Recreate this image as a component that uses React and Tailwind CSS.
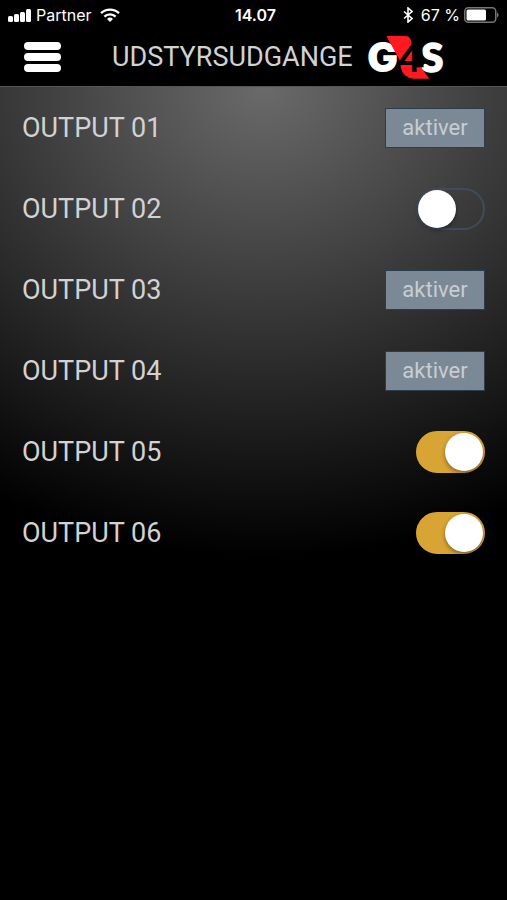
import React, { useState } from 'react';

const initialOutputs = [
  { id: 1, name: 'OUTPUT 01', type: 'pulse' },
  { id: 2, name: 'OUTPUT 02', type: 'switch', on: false },
  { id: 3, name: 'OUTPUT 03', type: 'pulse' },
  { id: 4, name: 'OUTPUT 04', type: 'pulse' },
  { id: 5, name: 'OUTPUT 05', type: 'switch', on: true },
  { id: 6, name: 'OUTPUT 06', type: 'switch', on: true },
];

function SignalIcon() {
  return (
    <svg width="24" height="14" viewBox="0 0 24 14" fill="#fff">
      <rect x="0" y="8" width="5" height="6" rx="1.5" />
      <rect x="6" y="6" width="5" height="8" rx="1.5" />
      <rect x="12" y="4" width="5" height="10" rx="1.5" />
      <rect x="18" y="1" width="5" height="13" rx="1.5" />
    </svg>
  );
}

function WifiIcon() {
  return (
    <svg width="20" height="14" viewBox="0 0 20 14" fill="none" stroke="#fff" strokeWidth="2.4">
      <path d="M1 5.2a13 13 0 0 1 18 0" />
      <path d="M4.4 8.6a8.2 8.2 0 0 1 11.2 0" />
      <path d="M7 10.9a4.4 4.4 0 0 1 6 0L10 14z" fill="#fff" stroke="none" />
    </svg>
  );
}

function BluetoothIcon() {
  return (
    <svg width="10" height="16" viewBox="0 0 10 16" fill="none" stroke="#fff" strokeWidth="1.6">
      <path d="M1 4.5l8 7L5 15V1l4 3.5-8 7" />
    </svg>
  );
}

function BatteryIcon() {
  return (
    <svg width="35" height="16" viewBox="0 0 35 16">
      <rect x="0.75" y="0.75" width="31" height="14.5" rx="3.5" fill="none" stroke="#777" strokeWidth="1.5" />
      <rect x="2.5" y="2.5" width="19.5" height="11" rx="1.5" fill="#fff" />
      <path d="M33 5.5c2 .8 2 4.2 0 5z" fill="#777" />
    </svg>
  );
}

function Logo() {
  return (
    <svg
      className="shrink-0"
      width="83"
      height="54"
      viewBox="0 -6 249 162"
      role="img"
      aria-label="G4S"
      fontFamily="Lato, sans-serif"
      fontWeight="900"
    >
      <text x="6" y="121" fontSize="124" fill="#fff" fontFamily="Inter, sans-serif">G</text>
      <text x="169" y="121" fontSize="120" fill="#fff" stroke="#fff" strokeWidth="5">S</text>
      <path
        d="M64 12h60q15 2 15 22l5 8 28 70 21 28h-48q-32-4-38-36V90z"
        fill="#ff1a1f"
      />
      {/* gap between the band and the S, to the right of the 4 */}
      <path d="M144 40h26l4 36 2 30h-32z" fill="#000" />
      <text x="101" y="121" fontSize="112" fill="#000">4</text>
    </svg>
  );
}

function StatusBar() {
  return (
    <div className="grid grid-cols-3 items-center h-7 px-2 pt-0.5 text-base leading-6 text-white font-['Inter',sans-serif]">
      <div className="flex items-center gap-1">
        <SignalIcon />
        <span>Partner</span>
        <span className="pl-1">
          <WifiIcon />
        </span>
      </div>
      <div className="pl-1 text-center font-semibold">14.07</div>
      <div className="flex items-center justify-end gap-1 whitespace-nowrap">
        <BluetoothIcon />
        <span className="pl-1">67 %</span>
        <BatteryIcon />
      </div>
    </div>
  );
}

function OutputRow({ output, onToggle }) {
  const inputId = `output-${output.id}`;

  return (
    <li className="flex items-center justify-between h-[81px] px-[22px]">
      {output.type === 'switch' ? (
        <>
          <label htmlFor={inputId}>{output.name}</label>
          <input
            id={inputId}
            type="checkbox"
            role="switch"
            checked={output.on}
            onChange={() => onToggle(output.id)}
            className="appearance-none flex items-center w-[69px] h-[42px] rounded-full border-2 border-[#414b5b] cursor-pointer before:block before:size-[38px] before:rounded-full before:bg-white before:shadow-[0_2px_4px_rgba(0,0,0,0.4)] checked:justify-end checked:bg-[#d8a434] checked:border-[#d8a434]"
          />
        </>
      ) : (
        <>
          <span id={inputId}>{output.name}</span>
          <button
            type="button"
            aria-describedby={inputId}
            className="w-[100px] h-10 border border-[#2b3e50] bg-[#7b8997] text-[22px] leading-7 text-[#c9cdd1]"
          >
            aktiver
          </button>
        </>
      )}
    </li>
  );
}

export default function App() {
  const [outputs, setOutputs] = useState(initialOutputs);

  const toggle = (id) => {
    setOutputs(outputs.map((o) => (o.id === id ? { ...o, on: !o.on } : o)));
  };

  return (
    <div className="flex flex-col min-h-screen bg-black text-[#d2d2d2] font-['Roboto',sans-serif]">
      <header className="bg-black">
        <StatusBar />
        <div className="flex items-center h-[58px] pl-6">
          <button type="button" aria-label="Menu" className="flex flex-col gap-[3px] w-[37px]">
            <span className="h-2 w-full rounded-full bg-white" />
            <span className="h-2 w-full rounded-full bg-white" />
            <span className="h-2 w-full rounded-full bg-white" />
          </button>
          <h1 className="ml-[51px] mr-3 text-[27px] leading-8">UDSTYRSUDGANGE</h1>
          <Logo />
        </div>
      </header>

      <main className="flex-1 border-t border-[#555] bg-[radial-gradient(550px_470px_at_52%_0,#6a6a6a,#000)]">
        <ul className="text-[27px] leading-8">
          {outputs.map((output) => (
            <OutputRow key={output.id} output={output} onToggle={toggle} />
          ))}
        </ul>
      </main>
    </div>
  );
}
